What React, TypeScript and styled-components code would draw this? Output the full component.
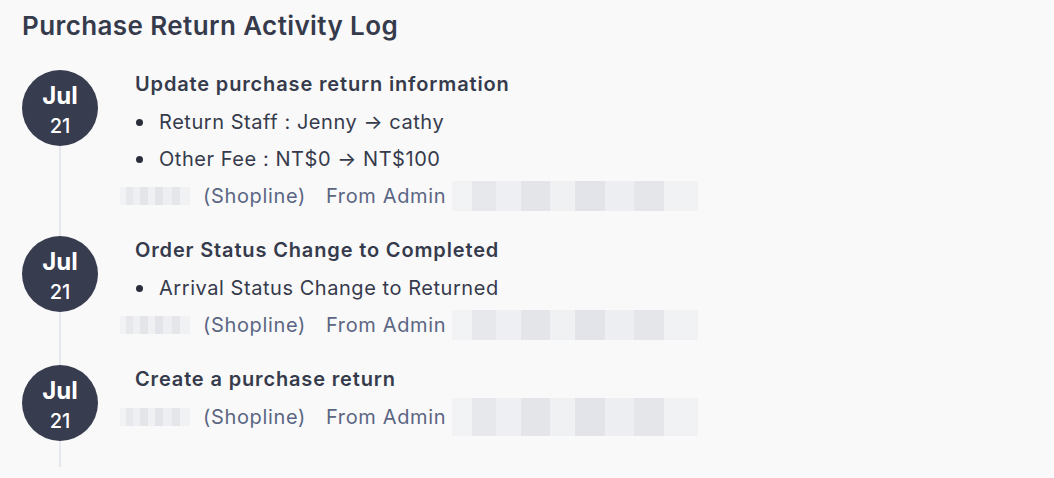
import React from "react";
import styled, { createGlobalStyle } from "styled-components";

const Global = createGlobalStyle`
  html, body { margin: 0; padding: 0; background: #f9f9fa; }
  body { font-family: Inter, "Noto Sans", "Liberation Sans", sans-serif; -webkit-font-smoothing: antialiased; }
`;

const Page = styled.div`
  width: 1054px;
  height: 478px;
  box-sizing: border-box;
  padding: 10px 22px 0 22px;
  background: #f9f9fa;
  overflow: hidden;
`;

const Title = styled.h2`
  margin: 0 0 28px 0;
  font-size: 26px;
  line-height: 32px;
  font-weight: 600;
  color: #363b4c;
  letter-spacing: 0.4px;
`;

const Timeline = styled.div`
  display: flex;
  flex-direction: column;
`;

const Entry = styled.div`
  display: flex;
  gap: 37px;
`;

const Rail = styled.div`
  width: 76px;
  flex: none;
  display: flex;
  flex-direction: column;
  align-items: center;
`;

const DateBadge = styled.div`
  width: 76px;
  height: 76px;
  box-sizing: border-box;
  padding-top: 12px;
  border-radius: 50%;
  background: #373c4e;
  color: #ffffff;
  display: flex;
  flex-direction: column;
  align-items: center;
  gap: 3px;
  flex: none;
`;

const Month = styled.span`
  font-size: 24px;
  line-height: 28px;
  font-weight: 700;
`;

const Day = styled.span`
  font-size: 20px;
  line-height: 26px;
  font-weight: 500;
`;

const Line = styled.div`
  flex: 1;
  width: 2px;
  background: #e4e7eb;
`;

const Body = styled.div<{ $last?: boolean }>`
  flex: 1;
  padding-bottom: ${(p) => (p.$last ? "32px" : "22px")};
  color: #363b4c;
`;

const Heading = styled.div`
  font-size: 20px;
  line-height: 28px;
  font-weight: 600;
  margin-bottom: 6px;
  color: #363b4c;
  letter-spacing: 0.85px;
`;

const Changes = styled.ul`
  list-style: none;
  margin: 0;
  padding: 0;
`;

const Change = styled.li`
  display: flex;
  align-items: center;
  gap: 16px;
  font-size: 20px;
  line-height: 37px;
  color: #363b4c;
  letter-spacing: 0.55px;
  &::before {
    content: "";
    width: 7px;
    height: 7px;
    border-radius: 50%;
    background: #2a2e3a;
    margin-left: 1px;
    flex: none;
  }
`;

const Meta = styled.div`
  display: flex;
  align-items: center;
  height: 36px;
  font-size: 20px;
  letter-spacing: 0.65px;
  color: #5b6683;
`;

const Source = styled.span`
  margin-left: 13px;
`;

const Origin = styled.span`
  margin-left: 20px;
`;

const Redacted = styled.span<{ $w: number; $h: number; $ml: number }>`
  display: inline-block;
  width: ${(p) => p.$w}px;
  height: ${(p) => p.$h}px;
  margin-left: ${(p) => p.$ml}px;
  background:
    linear-gradient(90deg,
      #f1f2f4 0 8%, #e6e7eb 8% 18%, #eeeff2 18% 28%, #e3e4e8 28% 40%,
      #eef0f2 40% 50%, #e2e3e8 50% 62%, #edeef1 62% 74%, #e4e5e9 74% 86%, #f0f1f3 86% 100%);
  opacity: 0.95;
`;

type Item = { title: string; changes: string[] };

const items: Item[] = [
  {
    title: "Update purchase return information",
    changes: ["Return Staff : Jenny → cathy", "Other Fee : NT$0 → NT$100"],
  },
  {
    title: "Order Status Change to Completed",
    changes: ["Arrival Status Change to Returned"],
  },
  {
    title: "Create a purchase return",
    changes: [],
  },
];

export default function App() {
  return (
    <>
      <Global />
      <Page>
        <Title>Purchase Return Activity Log</Title>
        <Timeline>
          {items.map((it, i) => {
            const last = i === items.length - 1;
            return (
              <Entry key={i}>
                <Rail>
                  <DateBadge>
                    <Month>Jul</Month>
                    <Day>21</Day>
                  </DateBadge>
                  <Line />
                </Rail>
                <Body $last={last}>
                  <Heading>{it.title}</Heading>
                  {it.changes.length > 0 && (
                    <Changes>
                      {it.changes.map((c) => (
                        <Change key={c}>{c}</Change>
                      ))}
                    </Changes>
                  )}
                  <Meta>
                    <Redacted $w={70} $h={18} $ml={-15} />
                    <Source>(Shopline)</Source>
                    <Origin>From Admin</Origin>
                    <Redacted $w={246} $h={last ? 38 : 30} $ml={6} />
                  </Meta>
                </Body>
              </Entry>
            );
          })}
        </Timeline>
      </Page>
    </>
  );
}
